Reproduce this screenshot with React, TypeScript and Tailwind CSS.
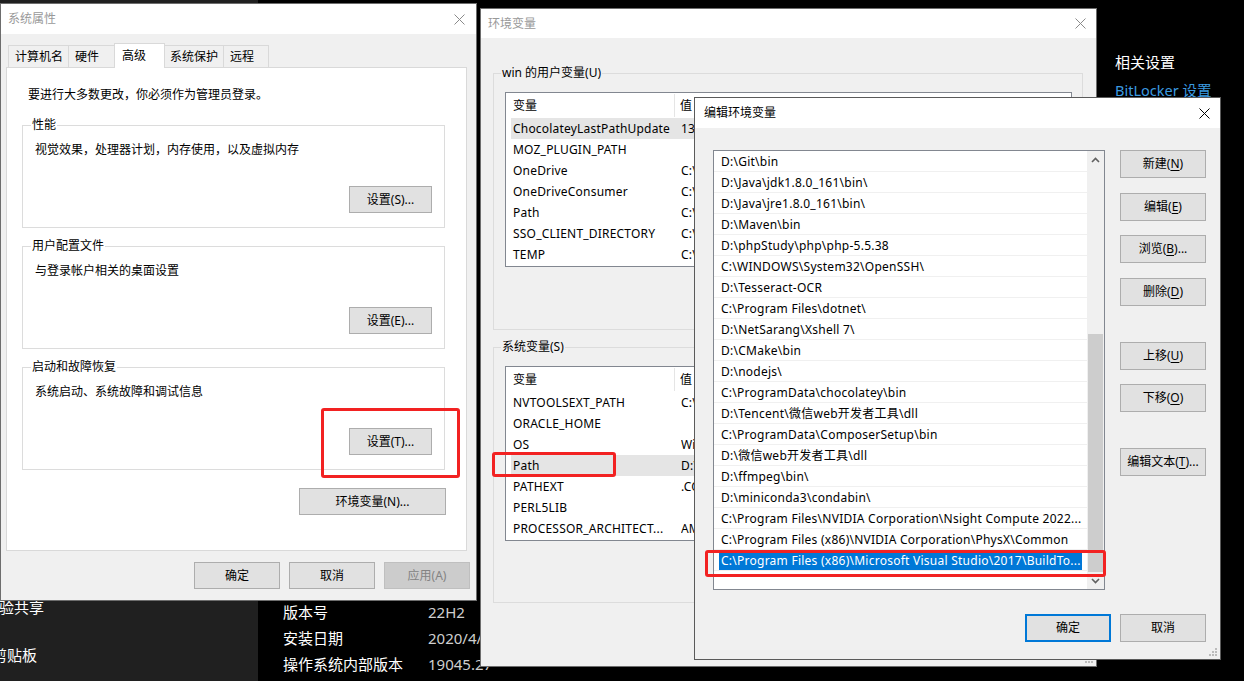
import React from "react";

const F = "font-['Noto_Sans','Noto_Sans_CJK_SC',sans-serif]";

function CloseX({ color }: { color: string }) {
  return (
    <svg width="11" height="11" viewBox="0 0 11 11">
      <path d="M0.5 0.5L10.5 10.5M10.5 0.5L0.5 10.5" stroke={color} strokeWidth="1" />
    </svg>
  );
}

function Btn({ children, className = "" }: { children: React.ReactNode; className?: string }) {
  return (
    <div className={`flex items-center justify-center bg-[#e1e1e1] border border-[#adadad] leading-[16px] ${className}`}>
      {children}
    </div>
  );
}

function Grip() {
  return (
    <svg width="10" height="10" viewBox="0 0 10 10">
      <rect x="7" y="1" width="2" height="2" fill="#bcbcbc" />
      <rect x="4" y="4" width="2" height="2" fill="#bcbcbc" />
      <rect x="7" y="4" width="2" height="2" fill="#bcbcbc" />
      <rect x="1" y="7" width="2" height="2" fill="#bcbcbc" />
      <rect x="4" y="7" width="2" height="2" fill="#bcbcbc" />
      <rect x="7" y="7" width="2" height="2" fill="#bcbcbc" />
    </svg>
  );
}

function Group({ label, text, btn }: { label: string; text: string; btn: string }) {
  return (
    <div className="relative w-[423px] h-[103px] border border-[#dcdcdc] flex flex-col pt-[16px] pl-[12px] pr-[12px] pb-[14px]">
      <span className="absolute -top-[9px] left-[8px] bg-white px-px leading-[16px]">{label}</span>
      <div className="leading-[16px]">{text}</div>
      <div className="mt-auto self-end">
        <Btn className="w-[83px] h-[27px]">{btn}</Btn>
      </div>
    </div>
  );
}

function VarList({ rows, selected }: { rows: [string, string][]; selected: number }) {
  return (
    <div className="w-[567px] h-[175px] border border-[#828790] bg-white overflow-hidden">
      <div className="flex h-[25px] items-center">
        <div className="w-[169px] h-[23px] flex items-center pl-[7px] border-r border-[#e5e5e5]">变量</div>
        <div className="pl-[5px]">值</div>
      </div>
      {rows.map(([n, v], i) => (
        <div key={n} className="flex h-[21px] pl-[5px]">
          <div className={`flex flex-1 items-center ${i === selected ? "bg-[#e5e5e5]" : ""}`}>
            <div className="w-[170px] pl-[2px] whitespace-nowrap overflow-hidden tracking-[0.2px]">{n}</div>
            <div className="w-[13px] whitespace-nowrap overflow-hidden tracking-[0.2px]">{v}</div>
          </div>
        </div>
      ))}
    </div>
  );
}

const userVars: [string, string][] = [
  ["ChocolateyLastPathUpdate", "13"],
  ["MOZ_PLUGIN_PATH", ""],
  ["OneDrive", "C:\\"],
  ["OneDriveConsumer", "C:\\"],
  ["Path", "C:\\"],
  ["SSO_CLIENT_DIRECTORY", "C:\\"],
  ["TEMP", "C:\\"],
];

const sysVars: [string, string][] = [
  ["NVTOOLSEXT_PATH", "C:\\"],
  ["ORACLE_HOME", ""],
  ["OS", "Wi"],
  ["Path", "D:\\"],
  ["PATHEXT", ".CO"],
  ["PERL5LIB", ""],
  ["PROCESSOR_ARCHITECT...", "AM"],
];

const paths = [
  "D:\\Git\\bin",
  "D:\\Java\\jdk1.8.0_161\\bin\\",
  "D:\\Java\\jre1.8.0_161\\bin\\",
  "D:\\Maven\\bin",
  "D:\\phpStudy\\php\\php-5.5.38",
  "C:\\WINDOWS\\System32\\OpenSSH\\",
  "D:\\Tesseract-OCR",
  "C:\\Program Files\\dotnet\\",
  "D:\\NetSarang\\Xshell 7\\",
  "D:\\CMake\\bin",
  "D:\\nodejs\\",
  "C:\\ProgramData\\chocolatey\\bin",
  "D:\\Tencent\\微信web开发者工具\\dll",
  "C:\\ProgramData\\ComposerSetup\\bin",
  "D:\\微信web开发者工具\\dll",
  "D:\\ffmpeg\\bin\\",
  "D:\\miniconda3\\condabin\\",
  "C:\\Program Files\\NVIDIA Corporation\\Nsight Compute 2022....",
  "C:\\Program Files (x86)\\NVIDIA Corporation\\PhysX\\Common",
  "C:\\Program Files (x86)\\Microsoft Visual Studio\\2017\\BuildTo...",
];

function Chevron({ up }: { up: boolean }) {
  return (
    <svg width="9" height="6" viewBox="0 0 9 6">
      <path d={up ? "M1 5L4.5 1.5L8 5" : "M1 1L4.5 4.5L8 1"} stroke="#606060" strokeWidth="1.6" fill="none" />
    </svg>
  );
}

function Ul({ k }: { k: string }) {
  return <span className="underline underline-offset-2">{k}</span>;
}

export default function App() {
  return (
    <div className={`relative w-[1244px] h-[681px] overflow-hidden bg-black ${F} text-[12px] text-black`}>
      {/* background settings window */}
      <div className="flex h-full">
        <div className="w-[258px] h-full bg-[#202020] text-white text-[15px] leading-[20px] flex flex-col pt-[597px] gap-[28px] overflow-hidden">
          <div className="-ml-[16px] whitespace-nowrap">体验共享</div>
          <div className="-ml-[8px] whitespace-nowrap">剪贴板</div>
        </div>
        <div className="flex-1 flex text-[15px] leading-[20px]">
          <div className="w-[857px] pt-[602px] pl-[25px] flex flex-col gap-[6px]">
            <div className="flex"><span className="w-[145px] text-white">版本号</span><span className="text-[#cfcfcf]">22H2</span></div>
            <div className="flex"><span className="w-[145px] text-white">安装日期</span><span className="text-[#cfcfcf]">2020/4/</span></div>
            <div className="flex"><span className="w-[145px] text-white">操作系统内部版本</span><span className="text-[#cfcfcf]">19045.27</span></div>
          </div>
          <div className="pt-[52px] flex flex-col gap-[8px]">
            <div className="text-white">相关设置</div>
            <div className="text-[#3b9be0] whitespace-nowrap text-[14.5px]">BitLocker 设置</div>
          </div>
        </div>
      </div>

      {/* 系统属性 */}
      <div className="absolute left-0 top-[3px] w-[477px] h-[598px] border border-[#6d6d6d] bg-[#f0f0f0] flex flex-col">
        <div className="h-[30px] bg-white flex items-center justify-between pl-[7px] pr-[11px]">
          <span className="text-[#999999] leading-[16px]">系统属性</span>
          <CloseX color="#8a8a8a" />
        </div>
        <div className="flex flex-col pl-[5px] pt-[9px]">
          <div className="flex items-end h-[25px] pl-[2px] -mb-px relative z-10">
            <div className="w-[60px] h-[22px] mb-px border-t border-l border-[#d9d9d9] flex items-center pl-[6px]">计算机名</div>
            <div className="w-[46px] h-[22px] mb-px border-t border-l border-[#d9d9d9] flex items-center pl-[6px]">硬件</div>
            <div className="w-[51px] h-[25px] bg-white border-t border-l border-r border-[#d9d9d9] flex items-start pt-[3px] pl-[7px]">高级</div>
            <div className="w-[58px] h-[22px] mb-px border-t border-[#d9d9d9] flex items-center pl-[5px]">系统保护</div>
            <div className="w-[46px] h-[22px] mb-px border-t border-l border-r border-[#d9d9d9] flex items-center pl-[6px]">远程</div>
          </div>
          <div className="w-[461px] h-[484px] border border-[#d9d9d9] bg-white flex flex-col">
            <div className="ml-[21px] mt-[19px] leading-[16px]">要进行大多数更改，你必须作为管理员登录。</div>
            <div className="ml-[15px] mt-[22px]">
              <Group label="性能" text="视觉效果，处理器计划，内存使用，以及虚拟内存" btn="设置(S)..." />
            </div>
            <div className="ml-[15px] mt-[18px]">
              <Group label="用户配置文件" text="与登录帐户相关的桌面设置" btn="设置(E)..." />
            </div>
            <div className="ml-[15px] mt-[18px]">
              <Group label="启动和故障恢复" text="系统启动、系统故障和调试信息" btn="设置(T)..." />
            </div>
            <div className="mt-[18px] self-end mr-[20px]">
              <Btn className="w-[147px] h-[27px]">环境变量(N)...</Btn>
            </div>
          </div>
        </div>
        <div className="flex justify-end gap-[9px] mt-[11px] pr-[6px]">
          <Btn className="w-[86px] h-[27px]">确定</Btn>
          <Btn className="w-[86px] h-[27px]">取消</Btn>
          <Btn className="w-[86px] h-[27px] !bg-[#cccccc] !border-[#bfbfbf] text-[#838383]">应用(A)</Btn>
        </div>
      </div>

      {/* 环境变量 */}
      <div className="absolute left-[480px] top-[8px] w-[617px] h-[659px] border border-[#6d6d6d] bg-[#f0f0f0] flex flex-col">
        <div className="h-[29px] bg-white flex items-center justify-between pl-[7px] pr-[10px]">
          <span className="text-[#999999] leading-[16px]">环境变量</span>
          <CloseX color="#8a8a8a" />
        </div>
        <div className="flex flex-col pl-[12px]">
          <div className="relative mt-[35px] w-[590px] h-[257px] border border-[#dcdcdc] pl-[11px] pt-[18px]">
            <span className="absolute -top-[9px] left-[7px] bg-[#f0f0f0] px-px leading-[16px]">win 的用户变量(U)</span>
            <VarList rows={userVars} selected={0} />
          </div>
          <div className="relative mt-[17px] w-[590px] h-[256px] border border-[#dcdcdc] pl-[11px] pt-[18px]">
            <span className="absolute -top-[9px] left-[7px] bg-[#f0f0f0] px-px leading-[16px]">系统变量(S)</span>
            <VarList rows={sysVars} selected={3} />
          </div>
        </div>
        <div className="absolute right-[2px] bottom-[2px] flex"><Grip /></div>
      </div>

      {/* 编辑环境变量 */}
      <div className="absolute left-[694px] top-[97px] w-[527px] h-[563px] border border-[#5a5a5a] bg-[#f0f0f0] flex flex-col">
        <div className="h-[30px] bg-white flex items-center justify-between pl-[9px] pr-[10px]">
          <span className="text-black leading-[16px]">编辑环境变量</span>
          <CloseX color="#000000" />
        </div>
        <div className="flex pl-[18px] pt-[22px]">
          <div className="w-[392px] h-[440px] border border-[#828790] bg-white flex">
            <div className="flex-1 flex flex-col overflow-hidden">
              {paths.map((p, i) => (
                <div key={p} className="h-[21px] border-b border-[#f0f0f0] px-[5px] flex">
                  <div
                    className={`flex-1 h-[19px] mt-px px-[2px] flex items-center whitespace-nowrap overflow-hidden tracking-[0.25px] ${
                      i === paths.length - 1 ? "bg-[#0078d7] text-white" : ""
                    }`}
                  >
                    {p}
                  </div>
                </div>
              ))}
            </div>
            <div className="w-[17px] h-full bg-[#f0f0f0] flex flex-col">
              <div className="h-[17px] flex items-center justify-center"><Chevron up /></div>
              <div className="flex-1 pt-[166px] px-px">
                <div className="h-[238px] bg-[#cdcdcd]" />
              </div>
              <div className="h-[17px] flex items-center justify-center"><Chevron up={false} /></div>
            </div>
          </div>
          <div className="ml-[15px] flex flex-col">
            <Btn className="w-[86px] h-[28px]">新建(<Ul k="N" />)</Btn>
            <Btn className="w-[86px] h-[28px] mt-[15px]">编辑(<Ul k="E" />)</Btn>
            <Btn className="w-[86px] h-[28px] mt-[14px]">浏览(<Ul k="B" />)...</Btn>
            <Btn className="w-[86px] h-[28px] mt-[15px]">删除(<Ul k="D" />)</Btn>
            <Btn className="w-[86px] h-[28px] mt-[36px]">上移(<Ul k="U" />)</Btn>
            <Btn className="w-[86px] h-[28px] mt-[14px]">下移(<Ul k="O" />)</Btn>
            <Btn className="w-[86px] h-[28px] mt-[36px]">编辑文本(<Ul k="T" />)...</Btn>
          </div>
        </div>
        <div className="flex justify-end gap-[9px] mt-[24px] pr-[14px]">
          <Btn className="w-[86px] h-[28px] !border-2 !border-[#0078d7]">确定</Btn>
          <Btn className="w-[86px] h-[28px]">取消</Btn>
        </div>
        <div className="absolute right-[2px] bottom-[2px] flex"><Grip /></div>
      </div>

      {/* red annotations */}
      <div className="absolute left-[321px] top-[408px] w-[139px] h-[70px] border-[3px] border-[#f22222] rounded-[3px]" />
      <div className="absolute left-[492px] top-[452px] w-[124px] h-[25px] border-[3px] border-[#f22222] rounded-[3px]" />
      <div className="absolute left-[705px] top-[550px] w-[401px] h-[27px] border-[3px] border-[#f22222] rounded-[3px]" />
    </div>
  );
}
